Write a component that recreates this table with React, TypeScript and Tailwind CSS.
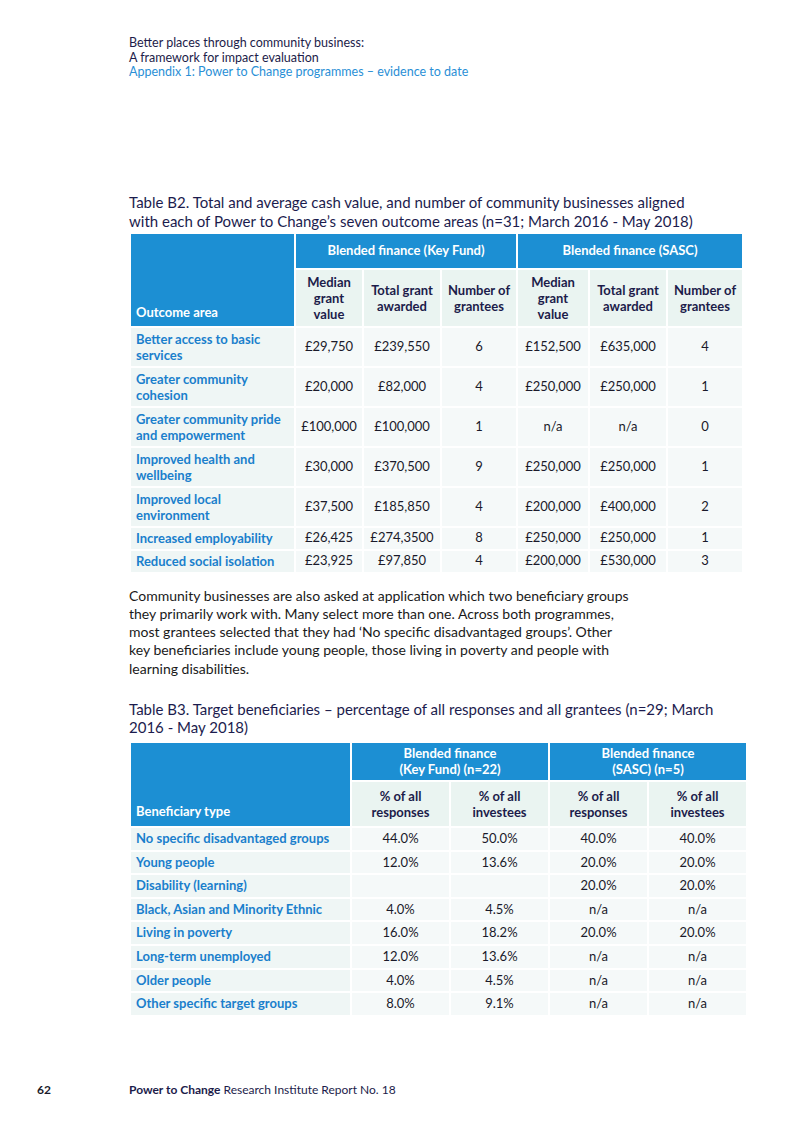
import React from "react";

const F = { fontFamily: "Lato, 'Noto Sans', sans-serif" };

const b2 = [
  ["Better access to basic services", "£29,750", "£239,550", "6", "£152,500", "£635,000", "4", true],
  ["Greater community cohesion", "£20,000", "£82,000", "4", "£250,000", "£250,000", "1", true],
  ["Greater community pride and empowerment", "£100,000", "£100,000", "1", "n/a", "n/a", "0", true],
  ["Improved health and wellbeing", "£30,000", "£370,500", "9", "£250,000", "£250,000", "1", true],
  ["Improved local environment", "£37,500", "£185,850", "4", "£200,000", "£400,000", "2", true],
  ["Increased employability", "£26,425", "£274,3500", "8", "£250,000", "£250,000", "1", false],
  ["Reduced social isolation", "£23,925", "£97,850", "4", "£200,000", "£530,000", "3", false],
] as const;

const b3 = [
  ["No specific disadvantaged groups", "44.0%", "50.0%", "40.0%", "40.0%"],
  ["Young people", "12.0%", "13.6%", "20.0%", "20.0%"],
  ["Disability (learning)", "", "", "20.0%", "20.0%"],
  ["Black, Asian and Minority Ethnic", "4.0%", "4.5%", "n/a", "n/a"],
  ["Living in poverty", "16.0%", "18.2%", "20.0%", "20.0%"],
  ["Long-term unemployed", "12.0%", "13.6%", "n/a", "n/a"],
  ["Older people", "4.0%", "4.5%", "n/a", "n/a"],
  ["Other specific target groups", "8.0%", "9.1%", "n/a", "n/a"],
];

const sub2 = [
  ["Median", "grant", "value"],
  ["Total grant", "awarded"],
  ["Number of", "grantees"],
  ["Median", "grant", "value"],
  ["Total grant", "awarded"],
  ["Number of", "grantees"],
];

export default function App() {
  return (
    <div className="w-[800px] h-[1132px] bg-white relative" style={F}>
      <div className="ml-[129px] pt-[36px] text-[12.5px] leading-[14.5px]">
        <div className="text-[#1c1c4a]">Better places through community business:</div>
        <div className="text-[#1c1c4a]">A framework for impact evaluation</div>
        <div className="text-[#2a8fd6]">Appendix 1: Power to Change programmes – evidence to date</div>
      </div>

      <div className="ml-[129px] mt-[113px] text-[15px] leading-[19px] text-[#1c1c4e] whitespace-nowrap">
        Table B2. Total and average cash value, and number of community businesses aligned
        <br />
        with each of Power to Change’s seven outcome areas (n=31; March 2016 - May 2018)
      </div>

      <table className="ml-[129px] mt-[1px] border-collapse table-fixed w-[613px] text-[13px]">
        <colgroup>
          <col className="w-[165px]" />
          <col className="w-[68px]" />
          <col className="w-[78px]" />
          <col className="w-[76px]" />
          <col className="w-[72px]" />
          <col className="w-[78px]" />
          <col className="w-[76px]" />
        </colgroup>
        <thead>
          <tr className="h-[36px]">
            <th rowSpan={2} className="bg-[#1c8fd3] border-2 border-white align-bottom text-left px-[5px] pb-[3px] text-white font-bold">Outcome area</th>
            <th colSpan={3} className="bg-[#1c8fd3] border-2 border-white text-white font-bold">Blended finance (Key Fund)</th>
            <th colSpan={3} className="bg-[#1c8fd3] border-2 border-white text-white font-bold">Blended finance (SASC)</th>
          </tr>
          <tr className="h-[58px]">
            {sub2.map((t, i) => (
              <th key={i} className="bg-[#eaf4f1] border-2 border-white text-[#1c1c4a] font-bold leading-[16px] px-[2px] whitespace-nowrap">
                {t.map((l, k) => (
                  <div key={k}>{l}</div>
                ))}
              </th>
            ))}
          </tr>
        </thead>
        <tbody>
          {b2.map((r, i) => (
            <tr key={i} className={r[7] ? "h-[40px]" : "h-[23px]"}>
              <td className="bg-[#eff6f5] border-2 border-white text-[#1a7fcc] font-bold leading-[16px] px-[5px] align-middle">{r[0]}</td>
              {r.slice(1, 7).map((c, j) => (
                <td key={j} className="bg-[#f5f9f9] border-2 border-white text-center text-[#1a1a2a] whitespace-nowrap">{c as string}</td>
              ))}
            </tr>
          ))}
        </tbody>
      </table>

      <div className="ml-[129px] mt-[13px] text-[14px] leading-[18.3px] text-[#1a1a1a] whitespace-nowrap">
        Community businesses are also asked at application which two beneficiary groups
        <br />
        they primarily work with. Many select more than one. Across both programmes,
        <br />
        most grantees selected that they had ‘No specific disadvantaged groups’. Other
        <br />
        key beneficiaries include young people, those living in poverty and people with
        <br />
        learning disabilities.
      </div>

      <div className="ml-[129px] mt-[22px] text-[15px] leading-[18.5px] text-[#1c1c4e] whitespace-nowrap">
        Table B3. Target beneficiaries – percentage of all responses and all grantees (n=29; March
        <br />
        2016 - May 2018)
      </div>

      <table className="ml-[129px] mt-[4px] border-collapse table-fixed w-[617px] text-[13px]">
        <colgroup>
          <col className="w-[221px]" />
          <col className="w-[99px]" />
          <col className="w-[99px]" />
          <col className="w-[99px]" />
          <col className="w-[99px]" />
        </colgroup>
        <thead>
          <tr className="h-[39px]">
            <th rowSpan={2} className="bg-[#1c8fd3] border-2 border-white align-bottom text-left px-[5px] pb-[4px] text-white font-bold">Beneficiary type</th>
            <th colSpan={2} className="bg-[#1c8fd3] border-2 border-white text-white font-bold leading-[16px]">Blended finance<br />(Key Fund) (n=22)</th>
            <th colSpan={2} className="bg-[#1c8fd3] border-2 border-white text-white font-bold leading-[16px]">Blended finance<br />(SASC) (n=5)</th>
          </tr>
          <tr className="h-[46px]">
            {["responses", "investees", "responses", "investees"].map((t, i) => (
              <th key={i} className="bg-[#eaf4f1] border-2 border-white text-[#1c1c4a] font-bold leading-[16px]">
                % of all<br />{t}
              </th>
            ))}
          </tr>
        </thead>
        <tbody>
          {b3.map((r, i) => (
            <tr key={i} className="h-[23.6px]">
              <td className="bg-[#eff6f5] border-2 border-white text-[#1a7fcc] font-bold px-[5px] whitespace-nowrap">{r[0]}</td>
              {r.slice(1).map((c, j) => (
                <td key={j} className="bg-[#f5f9f9] border-2 border-white text-center text-[#1a1a2a]">{c}</td>
              ))}
            </tr>
          ))}
        </tbody>
      </table>

      <div className="absolute left-[37px] top-[1083px] text-[12px] leading-[14px] font-bold text-[#1a1a2a]">62</div>
      <div className="absolute left-[129px] top-[1083px] text-[12px] leading-[14px] text-[#1c1c4a]">
        <span className="font-bold">Power to Change</span> Research Institute Report No. 18
      </div>
    </div>
  );
}
